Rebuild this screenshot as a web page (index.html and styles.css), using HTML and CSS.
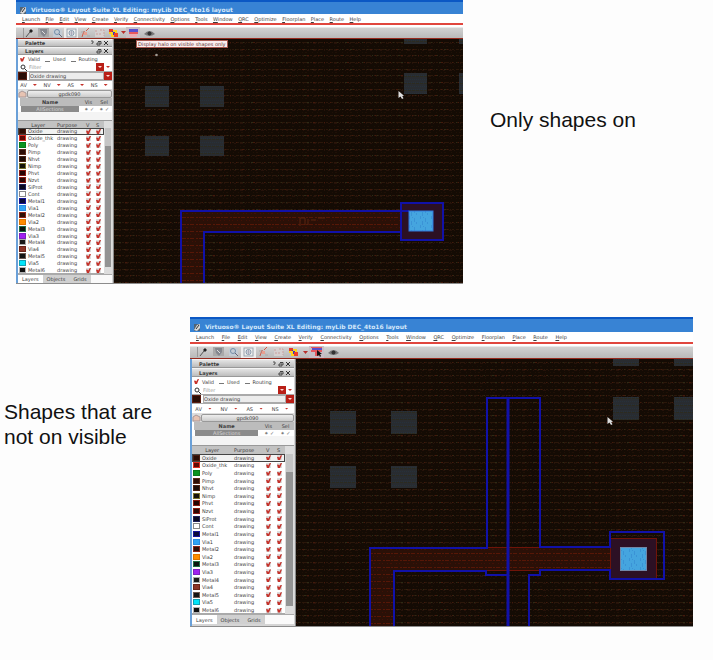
FILE: index.html
```html
<!DOCTYPE html>
<html lang="en">
<head>
<meta charset="utf-8">
<title>Layer visibility</title>
<link rel="stylesheet" href="styles.css">
</head>
<body>
<svg class="defs" aria-hidden="true">
  <defs>
    <pattern id="grid" width="94" height="20" patternUnits="userSpaceOnUse">
      <rect width="94" height="20" fill="#140b04"/>
      <g fill="none" stroke="#2b170a">
        <path d="M0 2.5H94M0 9.5H94M0 15.5H94" stroke-dasharray="3 1 5 1 1 1 2 2"/>
        <path d="M0 3.5H94M0 10.5H94M0 16.5H94" stroke="#26120a" stroke-dasharray="1 3 2 4 3 2 1 5"/>
        <path d="M2 6.5H94M0 12.5H94M0 18.5H94" stroke="#1f1006" stroke-dasharray="1 4 1 2 2 5"/>
        <path d="M4 2.5H94M9 9.5H94M1 15.5H94" stroke="#2d2b15" stroke-dasharray="1 12 1 7 2 15"/>
        <path d="M14 2.5H94M3 9.5H94M8 15.5H94" stroke="#43190b" stroke-dasharray="1 16 2 9 1 5"/>
      </g>
    </pattern>
    <pattern id="metal" width="17" height="14" patternUnits="userSpaceOnUse">
      <rect width="17" height="14" fill="#2b1007"/>
      <path d="M0 .5H17M0 7.5H17" stroke="#571707" stroke-dasharray="2 1 4 2"/>
      <path d="M0 3.5H17M3 10.5H17" stroke="#421006" stroke-dasharray="1 4 1 2"/>
    </pattern>
    <pattern id="pad" width="8" height="7" patternUnits="userSpaceOnUse">
      <rect width="8" height="7" fill="#292c30"/>
      <path d="M0 2.5H8M1 5.5H8" stroke="#26313b" stroke-dasharray="1 1"/>
      <path d="M0 6.5H8" stroke="#2c2b20" stroke-dasharray="3 1"/>
    </pattern>
    <pattern id="via" width="11" height="9" patternUnits="userSpaceOnUse">
      <rect width="11" height="9" fill="#45a5df"/>
      <path d="M2.5 0V3M7.5 2V6M4.5 5V9M9.5 6V8M5.5 1V2" stroke="#3b93d6"/>
    </pattern>
    <path id="pointer" d="M0 0V7L2 5.500L3.500 8L5 7.200L3.700 5L5.500 4.800Z" fill="#ddd"/>
  </defs>
</svg>

<main class="slide">
  <section class="example example-first">
    <div class="window compact" data-tooltip="Display halo on visible shapes only">
      <svg class="drawing" viewBox="114 39 349 244" preserveAspectRatio="xMinYMin slice" role="img" aria-label="Layout with visible shapes">
        <rect x="114" y="39" width="349" height="244" fill="url(#grid)"/>
        <g fill="url(#pad)">
          <path d="M145 86h24v21h-24zM200 86h24v21h-24zM145 136h24v20h-24zM200 136h24v20h-24zM404 73h23v21h-23zM404 39h23v5h-23zM459 73h4v21h-4zM459 39h4v5h-4z"/>
        </g>
        <path d="M180 283V211H402V231H204V283Z" fill="url(#metal)"/>
        <path d="M300 226v-8h5v7m3 0v-6m3 1h5m2-2h7" fill="none" stroke="#5a2410"/>
        <rect x="401" y="203" width="41" height="36" fill="#2c1024"/>
        <g fill="none" stroke="#1111a8" stroke-width="2">
          <path d="M181 283V211H409"/>
          <path d="M204 283V232H402"/>
          <rect x="401" y="203" width="42" height="37"/>
        </g>
        <rect x="409" y="211" width="24" height="20" fill="url(#via)" stroke="#3178dd"/>
        <circle cx="156.500" cy="55" r="1.300" fill="#a39b94"/>
        <use href="#pointer" x="398.500" y="91"/>
      </svg>
    </div>
    <p class="caption">Only shapes on</p>
  </section>

  <section class="example example-second">
    <p class="caption">Shapes that are not on visible</p>
    <div class="window roomy">
      <svg class="drawing" viewBox="296 359 397 267" preserveAspectRatio="xMinYMin slice" role="img" aria-label="Layout with hidden shapes outlined">
        <rect x="296" y="359" width="397" height="267" fill="url(#grid)"/>
        <g fill="url(#pad)">
          <path d="M330 411h26v23h-26zM391 411h26v23h-26zM330 466h26v22h-26zM391 466h26v22h-26zM613 397h26v23h-26zM613 359h26v7h-26zM674 397h19v23h-19zM674 359h19v7h-19z"/>
        </g>
        <path d="M369 626V547H611V571H394V626Z" fill="url(#metal)"/>
        <rect x="611" y="538" width="46" height="41" fill="#2c1024"/>
        <g fill="none" stroke="#701409">
          <path d="M487 547.500H541M487 570.500H541"/>
          <rect x="610.500" y="538.500" width="46" height="40"/>
        </g>
        <g fill="none" stroke="#1111a8" stroke-width="2">
          <path d="M370 626V548H487V398H540V547H610V532H664V579H610V570H540V575H529V626"/>
          <path d="M394 626V571H486V575H508"/>
          <path d="M508 398V626" stroke-width="3"/>
        </g>
        <rect x="620.500" y="547.500" width="26" height="23" fill="url(#via)" stroke="#7187a8"/>
        <use href="#pointer" x="607.500" y="417"/>
      </svg>
    </div>
  </section>
</main>
<script src="app.js"></script>
</body>
</html>
```
FILE: styles.css
```css
* { box-sizing: border-box; }

body {
  margin: 0;
  background: #fdfdfd;
  color: #111;
  font-family: "Liberation Sans", Arial, sans-serif;
}

.defs { position: absolute; width: 0; height: 0; }

.slide { display: flex; flex-direction: column; gap: 33px; }

.example { display: flex; align-items: flex-start; }
.example-first { padding-left: 16px; }
.example-second { padding-right: 20px; }

.caption { margin: 0; flex: none; font-size: 21px; line-height: 25px; }
.example-first .caption { width: 250px; padding: 107px 0 0 27px; }
.example-second .caption { width: 190px; padding: 82px 20px 0 4px; }

/* Window frame */
.window {
  flex: 1;
  min-width: 0;
  border-bottom: 1px solid #8c8c8c;
  background: #fff;
  color: #3c3c3c;
  font: 5px/6px "DejaVu Sans", sans-serif;
}
.compact {
  --title: 14px; --menu: 9px; --tools: 13px; --row: 8px; --selected: 6px; --spacer: 8px;
  --head: 7px; --table: 153px; --side: 98px; --button: 14px; --arrow: 6px; --menu-width: 339px;
  --tabbar: 10px; --scroll: 8px; --name: 29px; --purpose: 29px; --check: 10px;
}
.roomy {
  --title: 15px; --menu: 10px; --tools: 14px; --row: 9px; --selected: 8px; --spacer: 9px;
  --head: 8px; --table: 168px; --side: 106px; --button: 15px; --arrow: 8px; --menu-width: 371px;
  --tabbar: 11px; --scroll: 9px; --name: 32px; --purpose: 32px; --check: 11px;
}

button, input, select { margin: 0; padding: 0; border: 0; font: inherit; color: inherit; background: none; }
.window svg { display: block; }

.titlebar {
  display: flex;
  align-items: center;
  gap: 4px;
  height: var(--title);
  padding: 3px 3px 0;
  border-top: 2px solid #0b58c4;
  background: #3883d4;
  color: #d3e7fa;
  font-size: 6px;
  font-weight: bold;
  white-space: nowrap;
}

.menubar {
  display: flex;
  justify-content: space-between;
  align-items: center;
  width: var(--menu-width);
  max-width: 100%;
  height: var(--menu);
  margin-left: 6px;
}
.menubar a { color: #3c3c3c; text-decoration: none; }
.menubar a::first-letter { text-decoration: underline; }

.toolbar {
  display: flex;
  height: calc(var(--tools) + 3px);
  padding: 0 4px;
  border-top: 2px solid #e0463e;
  border-bottom: 1px solid #96291d;
  background: linear-gradient(#fff 0 2px, #d2d2d2 3px, #b9b9b9);
}
.toolbar button { display: grid; place-items: center; width: var(--button); padding-top: 2px; }
.toolbar button:first-child { margin-right: 2px; }
.toolbar button:last-child { margin-left: 2px; }
.toolbar .drop { width: var(--arrow); }
.toolbar .pressed { background: linear-gradient(transparent 0 2px, #eee 2px); }
.toolbar .lit { background: linear-gradient(transparent 0 2px, #c9bfc6 2px); }

.workspace { display: flex; }

/* Layer palette */
.side {
  flex: none;
  width: var(--side);
  padding-right: 1px;
  border-left: 2px solid #6aa0d8;
  border-right: 1px solid #8b8b8b;
  background: #d5d5d5;
}
.dock {
  display: flex;
  align-items: center;
  height: var(--row);
  padding: 0 3px 0 7px;
  gap: 4px;
  border-top: 1px solid #f4f4f4;
  border-bottom: 1px solid #999;
  background: linear-gradient(#e4e4e4, #bdbdbd);
  font-weight: bold;
}
.dock h2 { flex: 1; margin: 0; font-size: 5px; }

.filters { display: flex; align-items: center; gap: 5px; height: var(--row); padding-left: 2px; background: #fff; }
.filters label { display: flex; align-items: center; gap: 3px; }

.tick { appearance: none; display: block; width: 5px; height: 5px; background: #dedede; }
.filters .tick { border-bottom: 1px solid #777; background: #fff; }
.filters .tick:checked { border: 0; }
.tick:checked::before {
  content: "";
  display: block;
  width: 5px;
  height: 5px;
  background: #c5322b;
  clip-path: polygon(0 35%, 25% 30%, 45% 50%, 75% 0, 100% 0, 60% 100%, 20% 100%);
}

.field { display: flex; align-items: center; height: 9px; border-bottom: 1px solid #aaa; background: #fff; }
.field > svg { flex: none; margin: 0 2px; }
.field input { flex: 1; min-width: 0; height: 7px; }
.field input::placeholder { color: #999; opacity: 1; }
.field select { appearance: none; flex: 1; min-width: 0; height: 8px; border: 1px solid #aaa; background: #ececec; }
.red { display: grid; place-items: center; width: 8px; height: 8px; background: #b91f17; }
.red::before, .caret::before {
  content: "";
  width: 4px;
  height: 2px;
  background: #ffd8d4;
  clip-path: polygon(0 0, 100% 0, 50% 100%);
}
.caret { display: grid; place-items: center; width: 8px; height: 8px; }
.caret::before { background: #c5322b; }
.swatch { display: block; flex: none; width: 7px; height: 6px; border: 1px solid var(--edge); background: var(--fill); }
.field .swatch { width: 9px; height: 8px; margin-right: 2px; }

.sets { display: flex; justify-content: space-around; align-items: center; height: var(--row); background: #fff; }
.sets button { display: flex; align-items: center; gap: 4px; }

.library { display: flex; align-items: center; height: 9px; background: #ddd; }
.library button { flex: 1; height: 8px; border: 1px solid #999; border-radius: 2px; background: linear-gradient(#eee, #ccc); }

.sections, .layers { width: 100%; border-collapse: collapse; table-layout: fixed; }
th, td { padding: 0; font-weight: normal; text-align: left; overflow: visible; white-space: nowrap; line-height: 6px; }
th { height: 8px; background: #c2c2c2; }
.sections { background: #fff; border-bottom: var(--spacer) solid #f4f4f4; }
.sections th { text-align: center; background: #bcbcbc; }
.sections th:first-child { width: 66%; font-weight: bold; }
.sections td { height: var(--selected); text-align: center; color: #777; }
.sections td:first-child { border: solid #fff; border-width: 0 3px; background: #8b8b8b; color: #d5d5d5; }

.layer-list { display: flex; border-top: 1px solid #999; background: #fff; }
.layers { flex: 1; height: var(--table); }
.layers th { height: var(--head); }
.layers .icon { width: 10px; padding-left: 1px; }
.layers .name { width: var(--name); }
.layers .purpose { width: var(--purpose); }
.layers .check { width: var(--check); }
.layers tbody tr:first-child { outline: 1px solid #444; outline-offset: -1px; background: #f2f2f2; }
.scrollbar { flex: none; width: var(--scroll); border: solid #ddd; border-width: var(--head) 1px; background: linear-gradient(#c5c5c5 0 18px, #939393 18px); }

.tabs { display: flex; height: var(--tabbar); margin-top: -1px; border-top: 2px solid #aaa; background: #fafafa; }
.tabs button { padding: 0 4px; background: #d0d0d0; }
.tabs button[aria-selected="true"] { background: #fff; }

/* Drawing area */
.canvas { position: relative; flex: 1; min-width: 0; overflow: hidden; background: #140b04; }
.drawing { width: 100%; height: 100%; }
.tooltip {
  position: absolute;
  top: 1px;
  left: 22px;
  padding: 0 1px;
  border: 1px solid #a8584f;
  background: #fbeeee;
  color: #5e3434;
  white-space: nowrap;
}
```
FILE: app.js
```js
const menus = ["Launch", "File", "Edit", "View", "Create", "Verify", "Connectivity", "Options",
  "Tools", "Window", "QRC", "Optimize", "Floorplan", "Place", "Route", "Help"];

// name, fill, edge
const layers = [
  ["Oxide", "#2a0d05", "#4a1c10"], ["Oxide_thk", "#5e0a06", "#e02a20"], ["Poly", "#0a9420", "#0a7a1a"],
  ["Pimp", "#2c0e06", "#5a2a18"], ["Nhvt", "#1c0c06", "#4a2012"], ["Nimp", "#15120a", "#77702a"],
  ["Phvt", "#250605", "#8a1a12"], ["Nzvt", "#2c0805", "#8a1a12"], ["SiProt", "#0a0a20", "#20205a"],
  ["Cont", "#ffffff", "#888888"], ["Metal1", "#0a0a38", "#14149a"], ["Via1", "#30a4f4", "#2a8ce0"],
  ["Metal2", "#2e1006", "#8c2418"], ["Via2", "#ff8c00", "#dd7400"], ["Metal3", "#0a1410", "#1c6a44"],
  ["Via3", "#a020f0", "#7c20c0"], ["Metal4", "#1a1a1a", "#aaaaaa"], ["Via4", "#8c3428", "#6c2418"],
  ["Metal5", "#141414", "#6c5850"], ["Via5", "#00e4fa", "#10a0b4"], ["Metal6", "#111111", "#b5b5b5"]
];

const icon = (body, w = 11, h = 10) =>
  `<svg width="${w}" height="${h}" viewBox="0 0 ${w} ${h}" fill="none" aria-hidden="true">${body}</svg>`;

const tools = (cursor) => [
  ["Edit", "", icon('<path d="M1.500 0V10" stroke="#999"/><path d="M4 9L8 4" stroke="#555"/><path d="M7 3L9 1L11 3L9 5Z" fill="#222"/>')],
  ["Filter", "", icon('<rect width="11" height="9" fill="#a9a9a9"/><path d="M2 1H9V5L6 9L3 6Z" fill="#85888f"/><path d="M4 3L7 6" stroke="#ddd"/>')],
  ["Zoom", "", icon('<rect x="1" y="1" width="9" height="8" fill="#c4ccd4"/><circle cx="5" cy="4" r="2.500" stroke="#7590aa"/><path d="M7 6L10 9" stroke="#667"/>')],
  ["Fit", "pressed", icon('<rect x="1" y="1" width="9" height="8" stroke="#99a4ad"/><circle cx="5.500" cy="5" r="2.500" stroke="#8298aa"/><path d="M5.500 3V7M3.500 5H7.500" stroke="#aab"/>')],
  ["Edit in place", "", icon('<path d="M2 9L4 3L7 7M6 3L9 0" stroke="#cf5a48"/><path d="M1 4H5M7 8H10" stroke="#aaa"/><rect x="4" y="4" width="3" height="3" fill="#e8a090"/>')],
  ["Undo", "", icon('<rect x="1" y="1" width="9" height="8" fill="#d6d0d0"/><path d="M1 3H4M2 6H8M6 2H10V8" stroke="#c9a09e" stroke-dasharray="2 1"/>')],
  ["Highlight", "", icon('<rect x="1" y="1" width="4" height="3" fill="#e23c30"/><rect x="4" y="3" width="3" height="4" fill="#2f35c8"/><rect x="6" y="5" width="4" height="4" fill="#ee3e28"/><path d="M1 5H4V8H6M6 2V3H8V5" stroke="#ffd21c" stroke-width="2"/>')],
  ["Highlight options", "drop", icon('<path d="M0 1H5L2.500 4Z" fill="#b7302b"/>', 5, 5)],
  ["Halo", "lit", icon(cursor
    ? '<rect x="1" y="1" width="10" height="2" fill="#5a50d0"/><path d="M0 0H11V1H0ZM0 3H11V5H8V9H4V5H0Z" fill="#e7585e"/><path d="M6 3V9L8 8L9 10L10 9L9 7H11Z" fill="#111"/>'
    : '<rect x="1" y="1" width="9" height="3" fill="#5a50d0"/><rect x="1" y="4" width="9" height="2" fill="#e7585e"/><rect x="2" y="6" width="7" height="3" fill="#eeaab2"/>')],
  ["Visibility", "", icon('<path d="M0 5Q5.500 -1 11 5Q5.500 9 0 5Z" fill="#777"/><circle cx="5.500" cy="4.500" r="2" fill="#333"/>', 11, 8)]
].map(([label, cls, svg]) => `<button type="button" class="${cls}" aria-label="${label}">${svg}</button>`).join("");

const swatch = (fill, edge) => `<span class="swatch" style="--fill:${fill};--edge:${edge}"></span>`;
const tick = (label) => `<input type="checkbox" class="tick" checked aria-label="${label}">`;
const windowMarks = (help) => icon((help ? '<path d="M1 1H3V3H2V4" stroke="#555"/>' : "") +
  '<path d="M8 1.500H11V4M7 3H10V5H7Z" stroke="#444"/><path d="M14 1L18 5M18 1L14 5" stroke="#333"/>', 19, 6);

const rows = layers.map(([name, fill, edge]) => `<tr>
  <td class="icon">${swatch(fill, edge)}</td><td>${name}</td><td>drawing</td>
  <td>${tick(name + " visible")}</td><td>${tick(name + " selectable")}</td></tr>`).join("");

document.querySelectorAll(".window").forEach((win) => {
  const drawing = win.querySelector(".drawing");
  const tip = win.dataset.tooltip;
  win.innerHTML = `
    <header class="titlebar">
      ${icon('<rect x="1" y="1" width="6" height="7" fill="#506477"/><path d="M1 7L4 2L7 1V5L4 8" fill="#d6d6d6"/><path d="M3 6L6 2" stroke="#333"/>', 8, 8)}
      <span>Virtuoso® Layout Suite XL Editing: myLib DEC_4to16 layout</span>
    </header>
    <nav class="menubar">${menus.map((m) => `<a href="#">${m}</a>`).join("")}</nav>
    <div class="toolbar">${tools(!tip)}</div>
    <div class="workspace">
      <aside class="side">
        <div class="dock"><h2>Palette</h2>${windowMarks(true)}</div>
        <div class="dock"><h2>Layers</h2>${windowMarks(false)}</div>
        <div class="filters">
          <label><input type="checkbox" class="tick" checked>Valid</label>
          <label><input type="checkbox" class="tick">Used</label>
          <label><input type="checkbox" class="tick">Routing</label>
        </div>
        <div class="field">
          ${icon('<circle cx="3" cy="3" r="2" stroke="#333"/><path d="M4.500 4.500L7 7" stroke="#333"/>', 7, 7)}
          <input type="text" placeholder="Filter" aria-label="Filter">
          <button type="button" class="red" aria-label="Clear filter"></button>
          <button type="button" class="caret" aria-label="Filter history"></button>
        </div>
        <div class="field">
          ${swatch("#2a0d05", "#5a1c10")}
          <select aria-label="Current layer"><option>Oxide drawing</option></select>
          <button type="button" class="red" aria-label="Choose layer"></button>
        </div>
        <div class="sets">${["AV", "NV", "AS", "NS"].map((s) => `<button type="button">${s}<span class="caret"></span></button>`).join("")}</div>
        <div class="library">
          ${icon('<path d="M1 7V3L4 1L8 3V7Z" fill="#e7c3b2" stroke="#a99"/>', 9, 8)}
          <button type="button">gpdk090</button>
        </div>
        <table class="sections">
          <tr><th>Name</th><th>Vis</th><th>Sel</th></tr>
          <tr><td>AllSections</td><td>⁕ ✓</td><td>⁕ ✓</td></tr>
        </table>
        <div class="layer-list">
          <table class="layers">
            <thead><tr><th class="icon"></th><th class="name">&nbsp; Layer</th><th class="purpose">Purpose</th><th class="check">V</th><th>S</th></tr></thead>
            <tbody>${rows}</tbody>
          </table>
          <div class="scrollbar"></div>
        </div>
        <div class="tabs" role="tablist">
          <button type="button" role="tab" aria-selected="true">Layers</button>
          <button type="button" role="tab" aria-selected="false">Objects</button>
          <button type="button" role="tab" aria-selected="false">Grids</button>
        </div>
      </aside>
      <div class="canvas">${tip ? `<div class="tooltip" role="tooltip">${tip}</div>` : ""}</div>
    </div>`;
  win.querySelector(".canvas").append(drawing);
});
```
